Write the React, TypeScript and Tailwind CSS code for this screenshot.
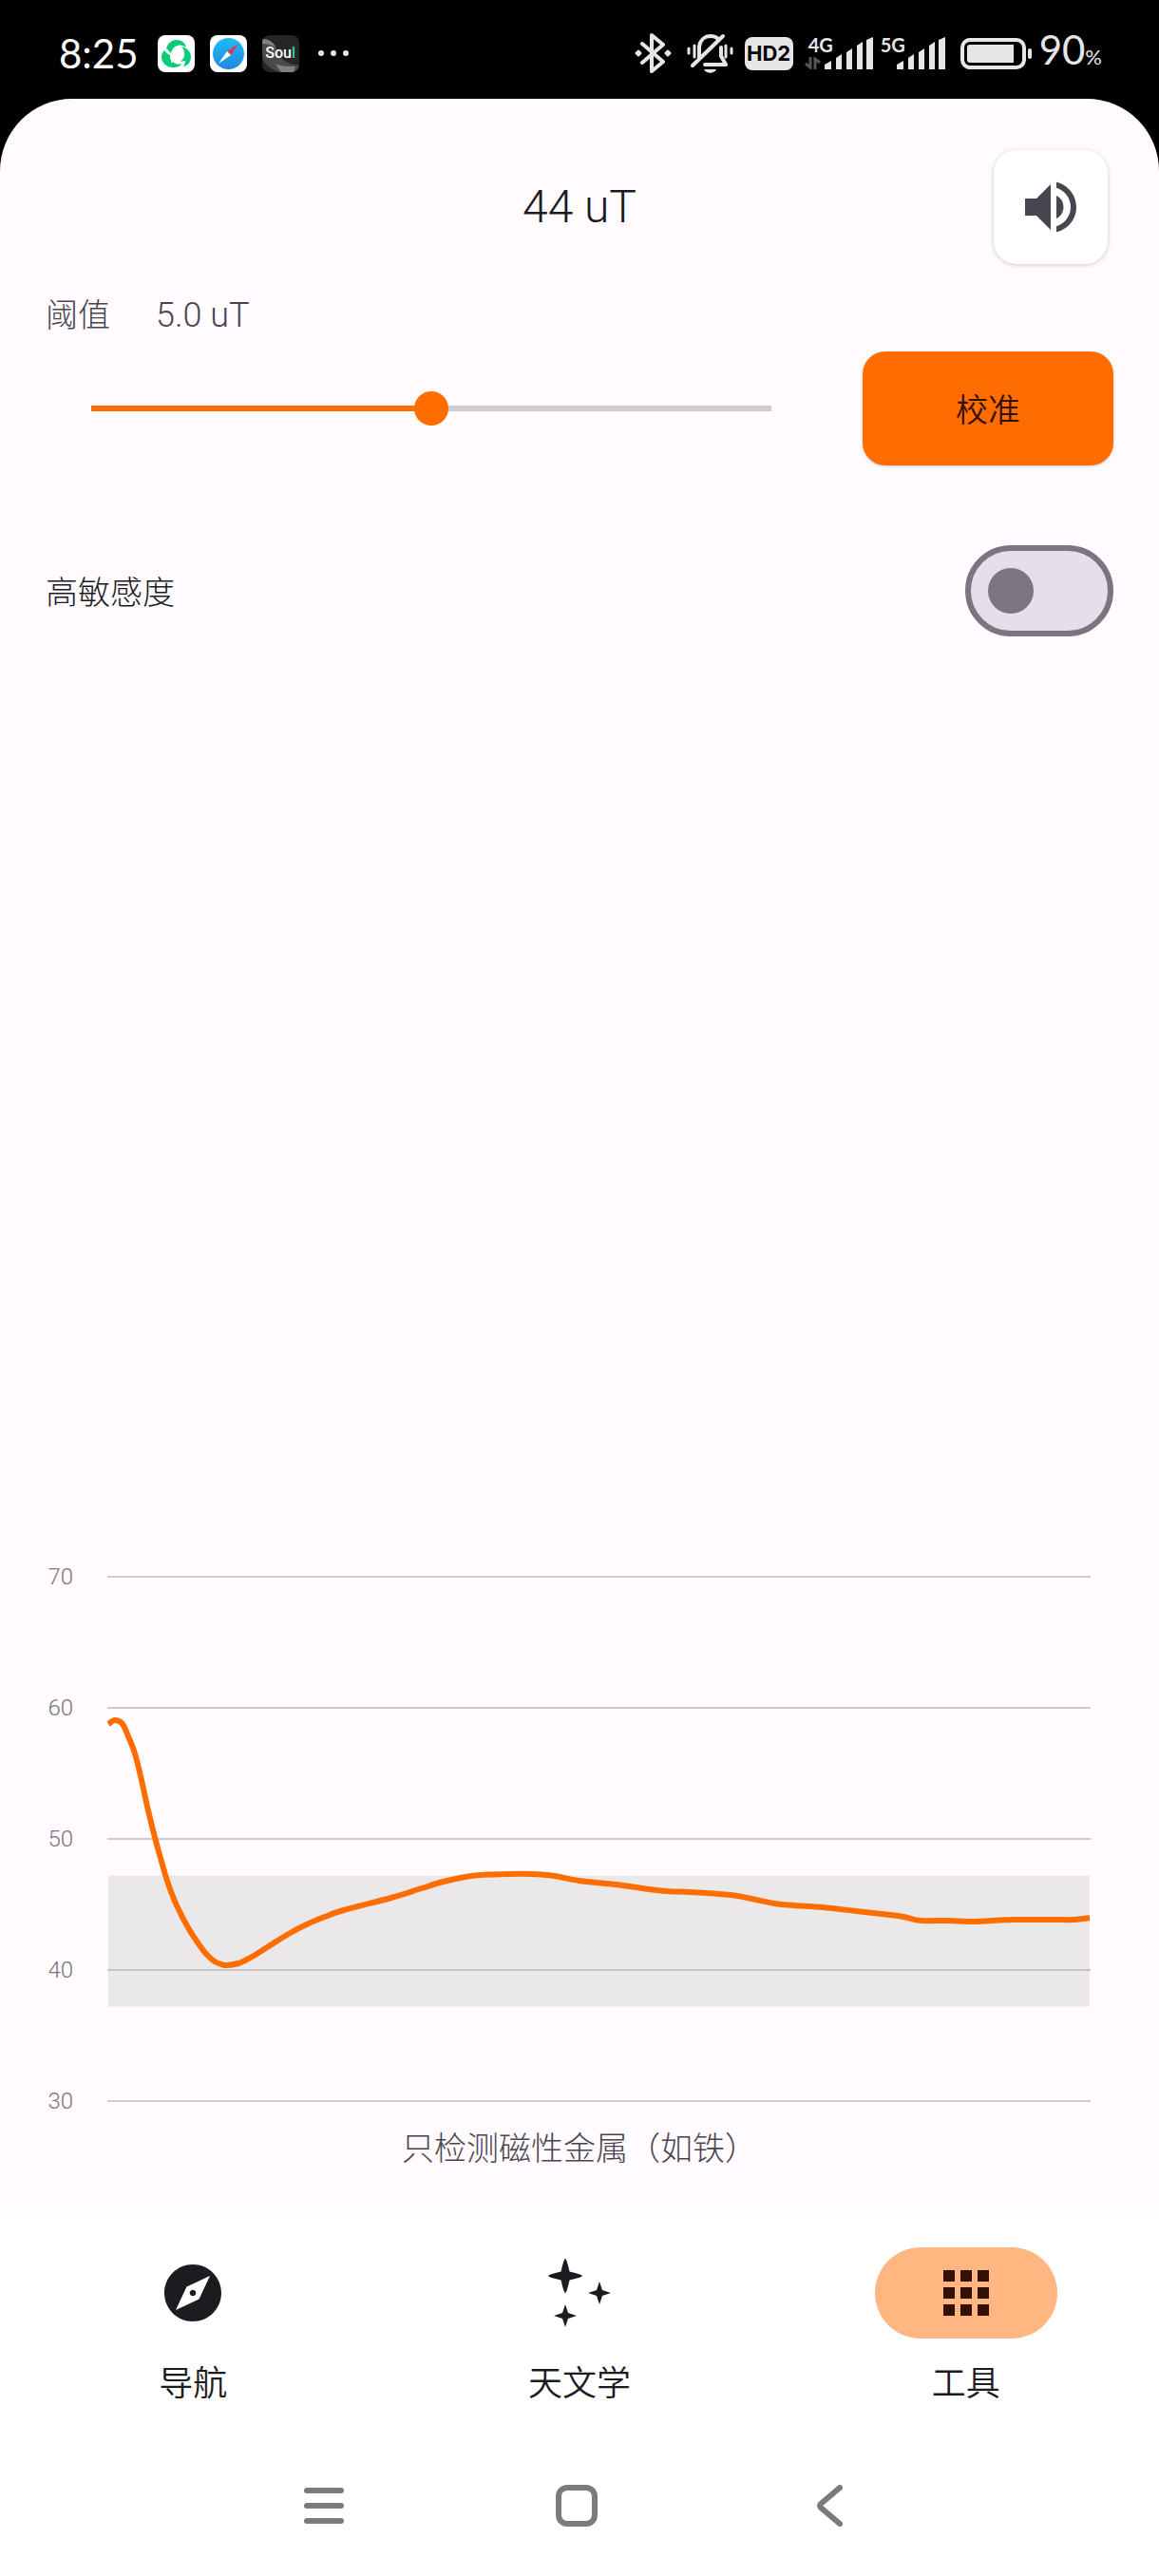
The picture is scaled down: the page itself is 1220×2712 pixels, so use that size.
import { useState } from "react";
import type { CSSProperties, ReactNode } from "react";
import { MdApps, MdExplore, MdVolumeUp } from "react-icons/md";

const MAX_THRESHOLD = 10;
const AXIS_LABELS = [70, 60, 50, 40, 30];

// Chart space: 1036 wide, 13.8 units per uT, 70 uT sits at y = 2
const CHART_WIDTH = 1036;
const CHART_HEIGHT = 556;
const UNITS_PER_UT = 13.8;

const TRACE: [number, number][] = [
  [1, 157], [8, 153], [16, 157], [22, 170], [29, 188], [36, 216], [43, 248], [51, 280],
  [58, 305], [64, 325], [73, 348], [86, 373], [100, 394], [107, 402], [113, 407], [120, 410],
  [126, 411], [138, 409], [145, 406], [156, 400], [170, 391], [191, 378], [210, 368], [229, 360],
  [249, 353], [299, 340], [331, 330], [354, 323], [377, 318], [393, 316], [422, 315], [447, 315],
  [471, 317], [497, 322], [536, 326], [571, 331], [590, 333], [614, 334], [645, 336], [664, 338],
  [703, 346], [723, 348], [754, 350], [789, 354], [816, 357], [839, 360], [857, 364], [886, 364],
  [909, 365], [933, 364], [956, 363], [995, 363], [1018, 363], [1035, 361],
];

function yFor(value: number) {
  return 2 + (70 - value) * UNITS_PER_UT;
}

// Catmull-Rom through every reading
function smoothPath(points: [number, number][]) {
  let d = `M${points[0][0]} ${points[0][1]}`;
  for (let i = 0; i < points.length - 1; i++) {
    const p0 = points[Math.max(i - 1, 0)];
    const p1 = points[i];
    const p2 = points[i + 1];
    const p3 = points[Math.min(i + 2, points.length - 1)];
    const c1 = [p1[0] + (p2[0] - p0[0]) / 6, p1[1] + (p2[1] - p0[1]) / 6];
    const c2 = [p2[0] - (p3[0] - p1[0]) / 6, p2[1] - (p3[1] - p1[1]) / 6];
    d += `C${c1[0]} ${c1[1]} ${c2[0]} ${c2[1]} ${p2[0]} ${p2[1]}`;
  }
  return d;
}

function VaultIcon() {
  return (
    <svg viewBox="0 0 39 39" className="size-[39px]">
      <rect width="39" height="39" rx="8" fill="#fff" />
      <g fill="#0bcb77">
        <path d="M9 14C11 8 15 5 20 5c5 0 9 3 10 8-3-2-6-3-9-2-4 1-6 4-7 8-2-2-3-3-5-5z" />
        <path d="M7 16c2 2 3 4 6 5 0 4 0 5 3 7 3 3 6 3 9 2-1 3-5 4-9 4C9 34 4 29 4 23c0-3 1-5 3-7z" />
        <path d="M25 12c5 1 10 5 10 11 0 5-3 9-8 10 1-2 2-4 2-6-2 0-3 1-5 1 3-3 5-6 4-9 0-3-1-5-3-7z" />
      </g>
      <path d="M14 24v5l5-2" fill="#fff" />
    </svg>
  );
}

function BrowserIcon() {
  return (
    <svg viewBox="0 0 39 39" className="size-[39px]">
      <defs>
        <linearGradient id="browser-dial" x1="0" y1="0" x2="0" y2="1">
          <stop offset="0" stopColor="#1fbcf7" />
          <stop offset="1" stopColor="#2188dc" />
        </linearGradient>
      </defs>
      <rect width="39" height="39" rx="8" fill="#fff" />
      <circle cx="19.5" cy="19.5" r="16.5" fill="url(#browser-dial)" />
      <path d="M30 9 18 17l4 4z" fill="#e0364c" />
      <path d="M9 30 18 17l4 4z" fill="#fff" />
    </svg>
  );
}

function SoulIcon() {
  return (
    <span className="relative flex size-[39px] items-center justify-center overflow-hidden rounded-lg bg-[#262626]">
      <svg viewBox="0 0 39 39" className="absolute inset-0 size-full">
        <path d="M0 4c9 0 14 5 16 12 3 9 8 14 23 16v7H18C6 35 0 28 0 20z" fill="#4a4a4a" />
        <path d="M0 4c8 0 12 4 14 9-5-3-9-4-14-4zM14 30c6 3 14 3 21 3l-2 6H20z" fill="#808080" />
      </svg>
      <span className="relative font-[Roboto] text-base leading-none font-medium text-white">
        Sou<span className="text-[#1fd6bd]">l</span>
      </span>
    </span>
  );
}

function BluetoothIcon() {
  return (
    <svg viewBox="0 0 39 42" className="h-[42px] w-[39px]" fill="none" stroke="#e6e6e6" strokeWidth="4" strokeLinejoin="round" strokeLinecap="round">
      <path d="M8 11l22 19-12 10V2l12 10L8 31" />
      <path d="M4 19l2 2-2 2-2-2zM35 19l2 2-2 2-2-2z" fill="#e6e6e6" strokeWidth="3" />
    </svg>
  );
}

function MutedIcon() {
  return (
    <svg viewBox="0 0 49 42" className="h-[42px] w-[49px]" fill="none" stroke="#e6e6e6" strokeWidth="4" strokeLinecap="round" strokeLinejoin="round">
      <path d="M13 26V14C14 7 19 3 25 3c3 0 6 1 8 3" />
      <path d="M36 15v9l5 9H19" />
      <path d="M6 34 38 3" />
      <path d="M18 38h13c-2 5-11 5-13 0z" fill="#e6e6e6" stroke="none" />
      <path d="M2 16v5M8 13v12M41 13v12M47 16v5" strokeWidth="3" />
    </svg>
  );
}

function Signal({ label, activity }: { label: string; activity?: boolean }) {
  return (
    <span className={activity ? "relative h-[34px] w-[72px]" : "relative h-[34px] w-[68px]"}>
      <span className={activity ? "absolute top-0 left-1 font-[Lato] text-xl leading-4 font-bold" : "absolute top-0 left-0 font-[Lato] text-xl leading-4 font-bold"}>
        {label}
      </span>
      <svg viewBox="0 0 51 34" className="absolute right-0 bottom-0 h-[34px] w-[51px]" fill="#e6e6e6">
        <path d="M0 34v-5l7-4v9zM12 34V22l6-4v16zM23 34V16l6-4v22zM34 34V9l6-4v29zM44 34V3l7-3v34z" />
      </svg>
      {activity && (
        <svg viewBox="0 0 17 13" className="absolute bottom-0 left-0 h-[13px] w-[17px]" fill="none" stroke="#565656" strokeWidth="3">
          <path d="M6 0v11L1 7M11 13V2l5 4" />
        </svg>
      )}
    </span>
  );
}

function StatusBar() {
  return (
    <div className="flex h-[104px] items-center justify-between pt-2 pr-[60px] pl-[62px] font-normal text-[#e6e6e6]">
      <div className="flex items-center gap-4">
        <span className="mr-1 font-[Lato] text-[42px] leading-10 text-white">8:25</span>
        <VaultIcon />
        <BrowserIcon />
        <SoulIcon />
        <svg viewBox="0 0 32 6" className="ml-1 h-[6px] w-[32px]" fill="#e6e6e6">
          <circle cx="3" cy="3" r="3" />
          <circle cx="16" cy="3" r="3" />
          <circle cx="29" cy="3" r="3" />
        </svg>
      </div>
      <div className="flex items-center">
        <BluetoothIcon />
        <span className="ml-4 flex">
          <MutedIcon />
        </span>
        <span className="ml-3 flex h-[35px] w-[51px] items-center justify-center rounded-lg bg-[#e6e6e6] font-[Inter] text-[22px] leading-none font-bold text-black">
          HD2
        </span>
        <span className="ml-3 flex gap-2">
          <Signal label="4G" activity />
          <Signal label="5G" />
        </span>
        <svg viewBox="0 0 75 33" className="ml-4 h-[33px] w-[75px]">
          <rect x="2" y="2" width="65" height="29" rx="8" fill="none" stroke="#e6e6e6" strokeWidth="4" />
          <path d="M10 7h46v19H10a3 3 0 0 1-3-3V10a3 3 0 0 1 3-3z" fill="#e6e6e6" />
          <rect x="71" y="11" width="4" height="11" rx="2" fill="#e6e6e6" />
        </svg>
        <span className="ml-2 font-[Lato] text-[42px] leading-10">
          90<span className="text-[22px]">%</span>
        </span>
      </div>
    </div>
  );
}

function FieldChart({ low, high }: { low: number; high: number }) {
  return (
    <div className="mr-6 flex gap-9">
      <div className="-my-3 flex w-[29px] flex-col justify-between text-right text-2xl leading-7 text-[#79747e]">
        {AXIS_LABELS.map((value) => (
          <span key={value}>{value}</span>
        ))}
      </div>
      <svg
        viewBox={`0 0 ${CHART_WIDTH} ${CHART_HEIGHT}`}
        preserveAspectRatio="none"
        className="h-[556px] min-w-0 flex-1"
        fill="none"
      >
        {AXIS_LABELS.map((value) => (
          <path key={value} d={`M0 ${yFor(value)}H${CHART_WIDTH}`} stroke="#d0cbd0" strokeWidth="2" />
        ))}
        <rect x="1" y={yFor(high)} width={CHART_WIDTH - 2} height={yFor(low) - yFor(high)} fill="#9ba191" fillOpacity="0.2" />
        <path d={smoothPath(TRACE)} stroke="#ff6d00" strokeWidth="6" strokeLinejoin="round" />
      </svg>
    </div>
  );
}

function StarsIcon() {
  return (
    <svg viewBox="0 0 72 72" className="size-[72px]" fill="currentColor">
      <path d="M21 0q1.500 0 4.500 13.500Q39 16.500 39 18t-13.500 4.500Q22.500 36 21 36t-4.500-13.500Q3 19.500 3 18t13.500-4.500Q19.500 0 21 0z" />
      <path d="M57 24l3 9 9 3-9 3-3 9-3-9-9-3 9-3zM21 48l3 9 9 3-9 3-3 9-3-9-9-3 9-3z" />
    </svg>
  );
}

function NavItem({ label, active, children }: { label: string; active?: boolean; children: ReactNode }) {
  return (
    <a
      href="#"
      aria-current={active ? "page" : undefined}
      className="flex flex-1 flex-col items-center gap-6 text-4xl leading-[48px] text-[#1c1b1f]"
    >
      <span
        className={
          active
            ? "flex h-24 w-48 items-center justify-center rounded-full bg-[#ffb681] text-[#341100]"
            : "flex h-24 w-48 items-center justify-center rounded-full"
        }
      >
        {children}
      </span>
      {label}
    </a>
  );
}

export default function App() {
  const [threshold, setThreshold] = useState(5);
  const [sensitive, setSensitive] = useState(false);

  return (
    <div className="flex min-h-screen flex-col bg-black font-[Roboto,'Noto_Sans_CJK_SC',sans-serif] font-light">
      <StatusBar />

      <main className="flex flex-1 flex-col rounded-t-[76px] bg-[#fffbff] px-12 pt-[54px] pb-11 text-[34px] leading-10 text-[#1c1b1f]">
        <header className="grid grid-cols-[1fr_auto_1fr] items-center">
          <h1 className="col-start-2 text-5xl leading-[56px] font-[350]">44 uT</h1>
          <button
            type="button"
            aria-label="声音"
            className="mr-1.5 flex size-[120px] items-center justify-center justify-self-end rounded-3xl bg-white text-[#49454f] shadow-[0_1px_5px_rgba(0,0,0,0.2)]"
          >
            <MdVolumeUp className="size-[72px]" />
          </button>
        </header>

        <div className="mt-[34px] flex gap-12 text-[#49454f]">
          <label htmlFor="threshold">阈值</label>
          <output htmlFor="threshold" className="text-4xl leading-10">{threshold.toFixed(1)} uT</output>
        </div>

        <div className="mt-[18px] flex items-center gap-12">
          <div className="flex flex-1 px-12">
            <input
              id="threshold"
              type="range"
              min={0}
              max={MAX_THRESHOLD}
              step={0.1}
              value={threshold}
              onChange={(e) => setThreshold(Number(e.target.value))}
              style={{ "--fill": `${(threshold / MAX_THRESHOLD) * 100}%` } as CSSProperties}
              className="h-9 w-full appearance-none bg-transparent [&::-webkit-slider-runnable-track]:h-1.5 [&::-webkit-slider-runnable-track]:bg-[linear-gradient(to_right,#ff6d00_var(--fill),#d0cbcf_var(--fill))] [&::-webkit-slider-thumb]:-mt-[15px] [&::-webkit-slider-thumb]:size-9 [&::-webkit-slider-thumb]:appearance-none [&::-webkit-slider-thumb]:rounded-full [&::-webkit-slider-thumb]:bg-[#ff6d00]"
            />
          </div>
          <button
            type="button"
            className="h-[120px] w-[264px] rounded-3xl bg-[#ff6d00] pt-1 font-[350] text-[#341100] shadow-[0_1px_3px_rgba(0,0,0,0.2)]"
          >
            校准
          </button>
        </div>

        <div className="mt-[84px] flex items-center justify-between">
          <label htmlFor="sensitivity" className="pt-1">高敏感度</label>
          <input
            id="sensitivity"
            type="checkbox"
            role="switch"
            checked={sensitive}
            onChange={(e) => setSensitive(e.target.checked)}
            className="flex h-24 w-[156px] appearance-none items-center rounded-full border-6 border-[#7a757f] bg-[#e6dfeb] px-[18px] before:size-12 before:rounded-full before:bg-[#7a757f] checked:border-[#ff6d00] checked:bg-[#ff6d00] checked:before:translate-x-[60px] checked:before:bg-white"
          />
        </div>

        <div className="flex-1" />

        <FieldChart low={37.2} high={47.2} />
        <p className="mt-6 text-center leading-[48px] text-[#49454f]">只检测磁性金属（如铁）</p>
      </main>

      <nav className="flex bg-white pt-9 pb-[30px] font-[350]">
        <NavItem label="导航">
          <MdExplore className="size-[72px]" />
        </NavItem>
        <NavItem label="天文学">
          <StarsIcon />
        </NavItem>
        <NavItem label="工具" active>
          <MdApps className="size-[72px]" />
        </NavItem>
      </nav>

      <div className="flex h-[148px] items-center justify-center gap-[222px] bg-white pr-1.5">
        <button type="button" aria-label="最近任务">
          <svg viewBox="0 0 44 44" className="size-11" stroke="#7b7b7b" strokeWidth="6" strokeLinecap="round">
            <path d="M4 6h36M4 22h36M4 38h36" />
          </svg>
        </button>
        <button type="button" aria-label="主屏幕">
          <svg viewBox="0 0 44 44" className="size-11" fill="none" stroke="#7b7b7b" strokeWidth="6">
            <rect x="3" y="3" width="38" height="38" rx="9" />
          </svg>
        </button>
        <button type="button" aria-label="返回">
          <svg viewBox="0 0 44 44" className="size-11" fill="none" stroke="#7b7b7b" strokeWidth="6" strokeLinecap="round" strokeLinejoin="round">
            <path d="M33 3 13 20q-2 2 0 4l20 17" />
          </svg>
        </button>
      </div>
    </div>
  );
}
